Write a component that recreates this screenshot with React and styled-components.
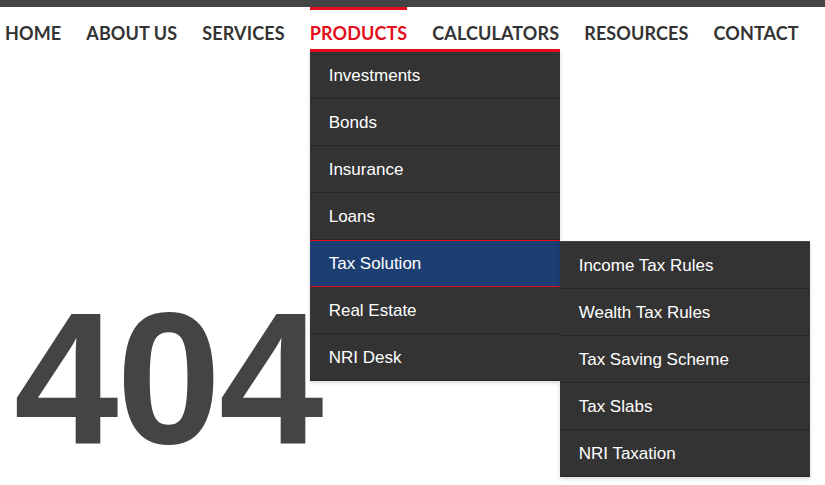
import styled, { createGlobalStyle } from "styled-components";

const GlobalStyle = createGlobalStyle`
  html, body {
    margin: 0;
    padding: 0;
    background: #fff;
  }
  * {
    box-sizing: border-box;
  }
`;

const mainLinks = [
  "HOME",
  "ABOUT US",
  "SERVICES",
  "PRODUCTS",
  "CALCULATORS",
  "RESOURCES",
  "CONTACT",
];

const products = [
  "Investments",
  "Bonds",
  "Insurance",
  "Loans",
  "Tax Solution",
  "Real Estate",
  "NRI Desk",
];

const taxLinks = [
  "Income Tax Rules",
  "Wealth Tax Rules",
  "Tax Saving Scheme",
  "Tax Slabs",
  "NRI Taxation",
];

function App() {
  return (
    <Page>
      <GlobalStyle />
      <TopBar />
      <Nav>
        {mainLinks.map((link) => (
          <NavItem key={link} $active={link === "PRODUCTS"}>
            {link}
            {link === "PRODUCTS" && (
              <Dropdown>
                {products.map((p) => (
                  <DropItem key={p} $active={p === "Tax Solution"}>
                    {p}
                    {p === "Tax Solution" && (
                      <SubMenu>
                        {taxLinks.map((t) => (
                          <DropItem key={t}>{t}</DropItem>
                        ))}
                      </SubMenu>
                    )}
                  </DropItem>
                ))}
              </Dropdown>
            )}
          </NavItem>
        ))}
      </Nav>
      <Main>
        <ErrorCode>404</ErrorCode>
      </Main>
    </Page>
  );
}

export default App;

const Page = styled.div`
  width: 825px;
  height: 485px;
  overflow: hidden;
  background: #fff;
`;

const TopBar = styled.div`
  height: 7px;
  background: #444;
`;

const Nav = styled.ul`
  display: flex;
  gap: 25px;
  margin: 0;
  padding: 0 0 0 5px;
  list-style: none;
  position: relative;
  z-index: 5;
`;

const NavItem = styled.li`
  position: relative;
  height: 42px;
  padding-top: 14px;
  border-top: 3px solid ${(p) => (p.$active ? "#e30d1b" : "transparent")};
  font-family: Lato, "Liberation Sans", sans-serif;
  font-weight: 700;
  font-size: 18px;
  line-height: 18px;
  letter-spacing: 0.12px;
  color: ${(p) => (p.$active ? "#e30d1b" : "#333")};
  white-space: nowrap;
`;

const Dropdown = styled.ul`
  position: absolute;
  top: 100%;
  left: 0;
  width: 250px;
  margin: 0;
  padding: 0;
  list-style: none;
  letter-spacing: 0;
  background: #333;
  border-top: 3px solid #e30d1b;
  box-shadow: 0 2px 4px rgba(0, 0, 0, 0.15);
`;

const DropItem = styled.li`
  position: relative;
  height: 47px;
  padding-left: 19px;
  display: flex;
  align-items: center;
  font-family: "Liberation Sans", Arial, sans-serif;
  font-weight: 400;
  font-size: 17px;
  padding-top: 1px;
  color: #fff;
  background: ${(p) => (p.$active ? "#1d3e73" : "#333")};
  border-top: ${(p) => (p.$active ? "1px solid #e30d1b" : "none")};
  border-bottom: 1px solid ${(p) => (p.$active ? "#e30d1b" : "#262626")};
`;

const SubMenu = styled.ul`
  position: absolute;
  top: 0;
  left: 100%;
  width: 250px;
  margin: 0;
  padding: 0;
  list-style: none;
  background: #333;
  border-top: 1px solid #444;
  box-shadow: 0 2px 4px rgba(0, 0, 0, 0.15);
`;

const Main = styled.main`
  padding: 235px 0 0 14px;
`;

const ErrorCode = styled.h1`
  margin: 0;
  font-family: "Liberation Sans", Arial, sans-serif;
  font-weight: 700;
  font-size: 188px;
  line-height: 1;
  letter-spacing: -2px;
  color: #444;
`;
